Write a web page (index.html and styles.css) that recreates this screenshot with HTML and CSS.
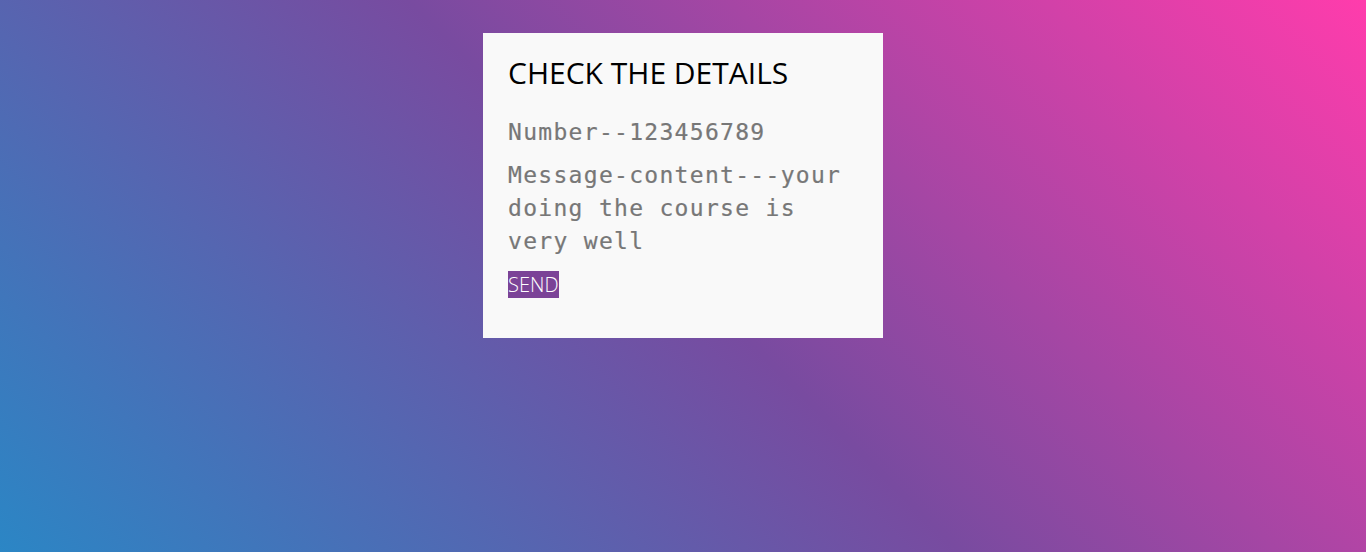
FILE: index.html
```html
<!DOCTYPE html>
<html>
<head>
<meta charset="utf-8">
<link rel="stylesheet" href="styles.css">
</head>
<body>
<div class="card">
  <h2 class="title">CHECK THE DETAILS</h2>
  <p class="line">Number--123456789</p>
  <p class="line msg">Message-content---your doing the course is very well</p>
  <button class="send">SEND</button>
</div>
</body>
</html>
```
FILE: styles.css
```css
html, body {
  margin: 0;
  height: 100%;
}
body {
  background: linear-gradient(225deg, #FF3CAC 0%, #784BA0 50%, #2B86C5 100%);
  font-family: "Open Sans", sans-serif;
  display: flex;
  justify-content: center;
  align-items: flex-start;
}
.card {
  margin-top: 33px;
  width: 400px;
  box-sizing: border-box;
  background: #f9f9f9;
  padding: 19px 25px 40px;
}
.title {
  margin: 0 0 23px;
  font-size: 30px;
  font-weight: 400;
  line-height: 41px;
  color: #000;
}
.line {
  margin: 0 0 10px;
  font-family: "DejaVu Sans Mono", monospace;
  font-size: 23px;
  letter-spacing: 1.3px;
  line-height: 33px;
  color: #777;
  -webkit-text-stroke: 0.2px #777;
}
.msg {
  margin-bottom: 13px;
}
.send {
  display: block;
  border: none;
  margin: 0;
  padding: 0;
  background: #7b4397;
  color: #fff;
  font-family: "Open Sans", sans-serif;
  font-weight: 300;
  font-size: 20px;
  line-height: 27px;
}
```
